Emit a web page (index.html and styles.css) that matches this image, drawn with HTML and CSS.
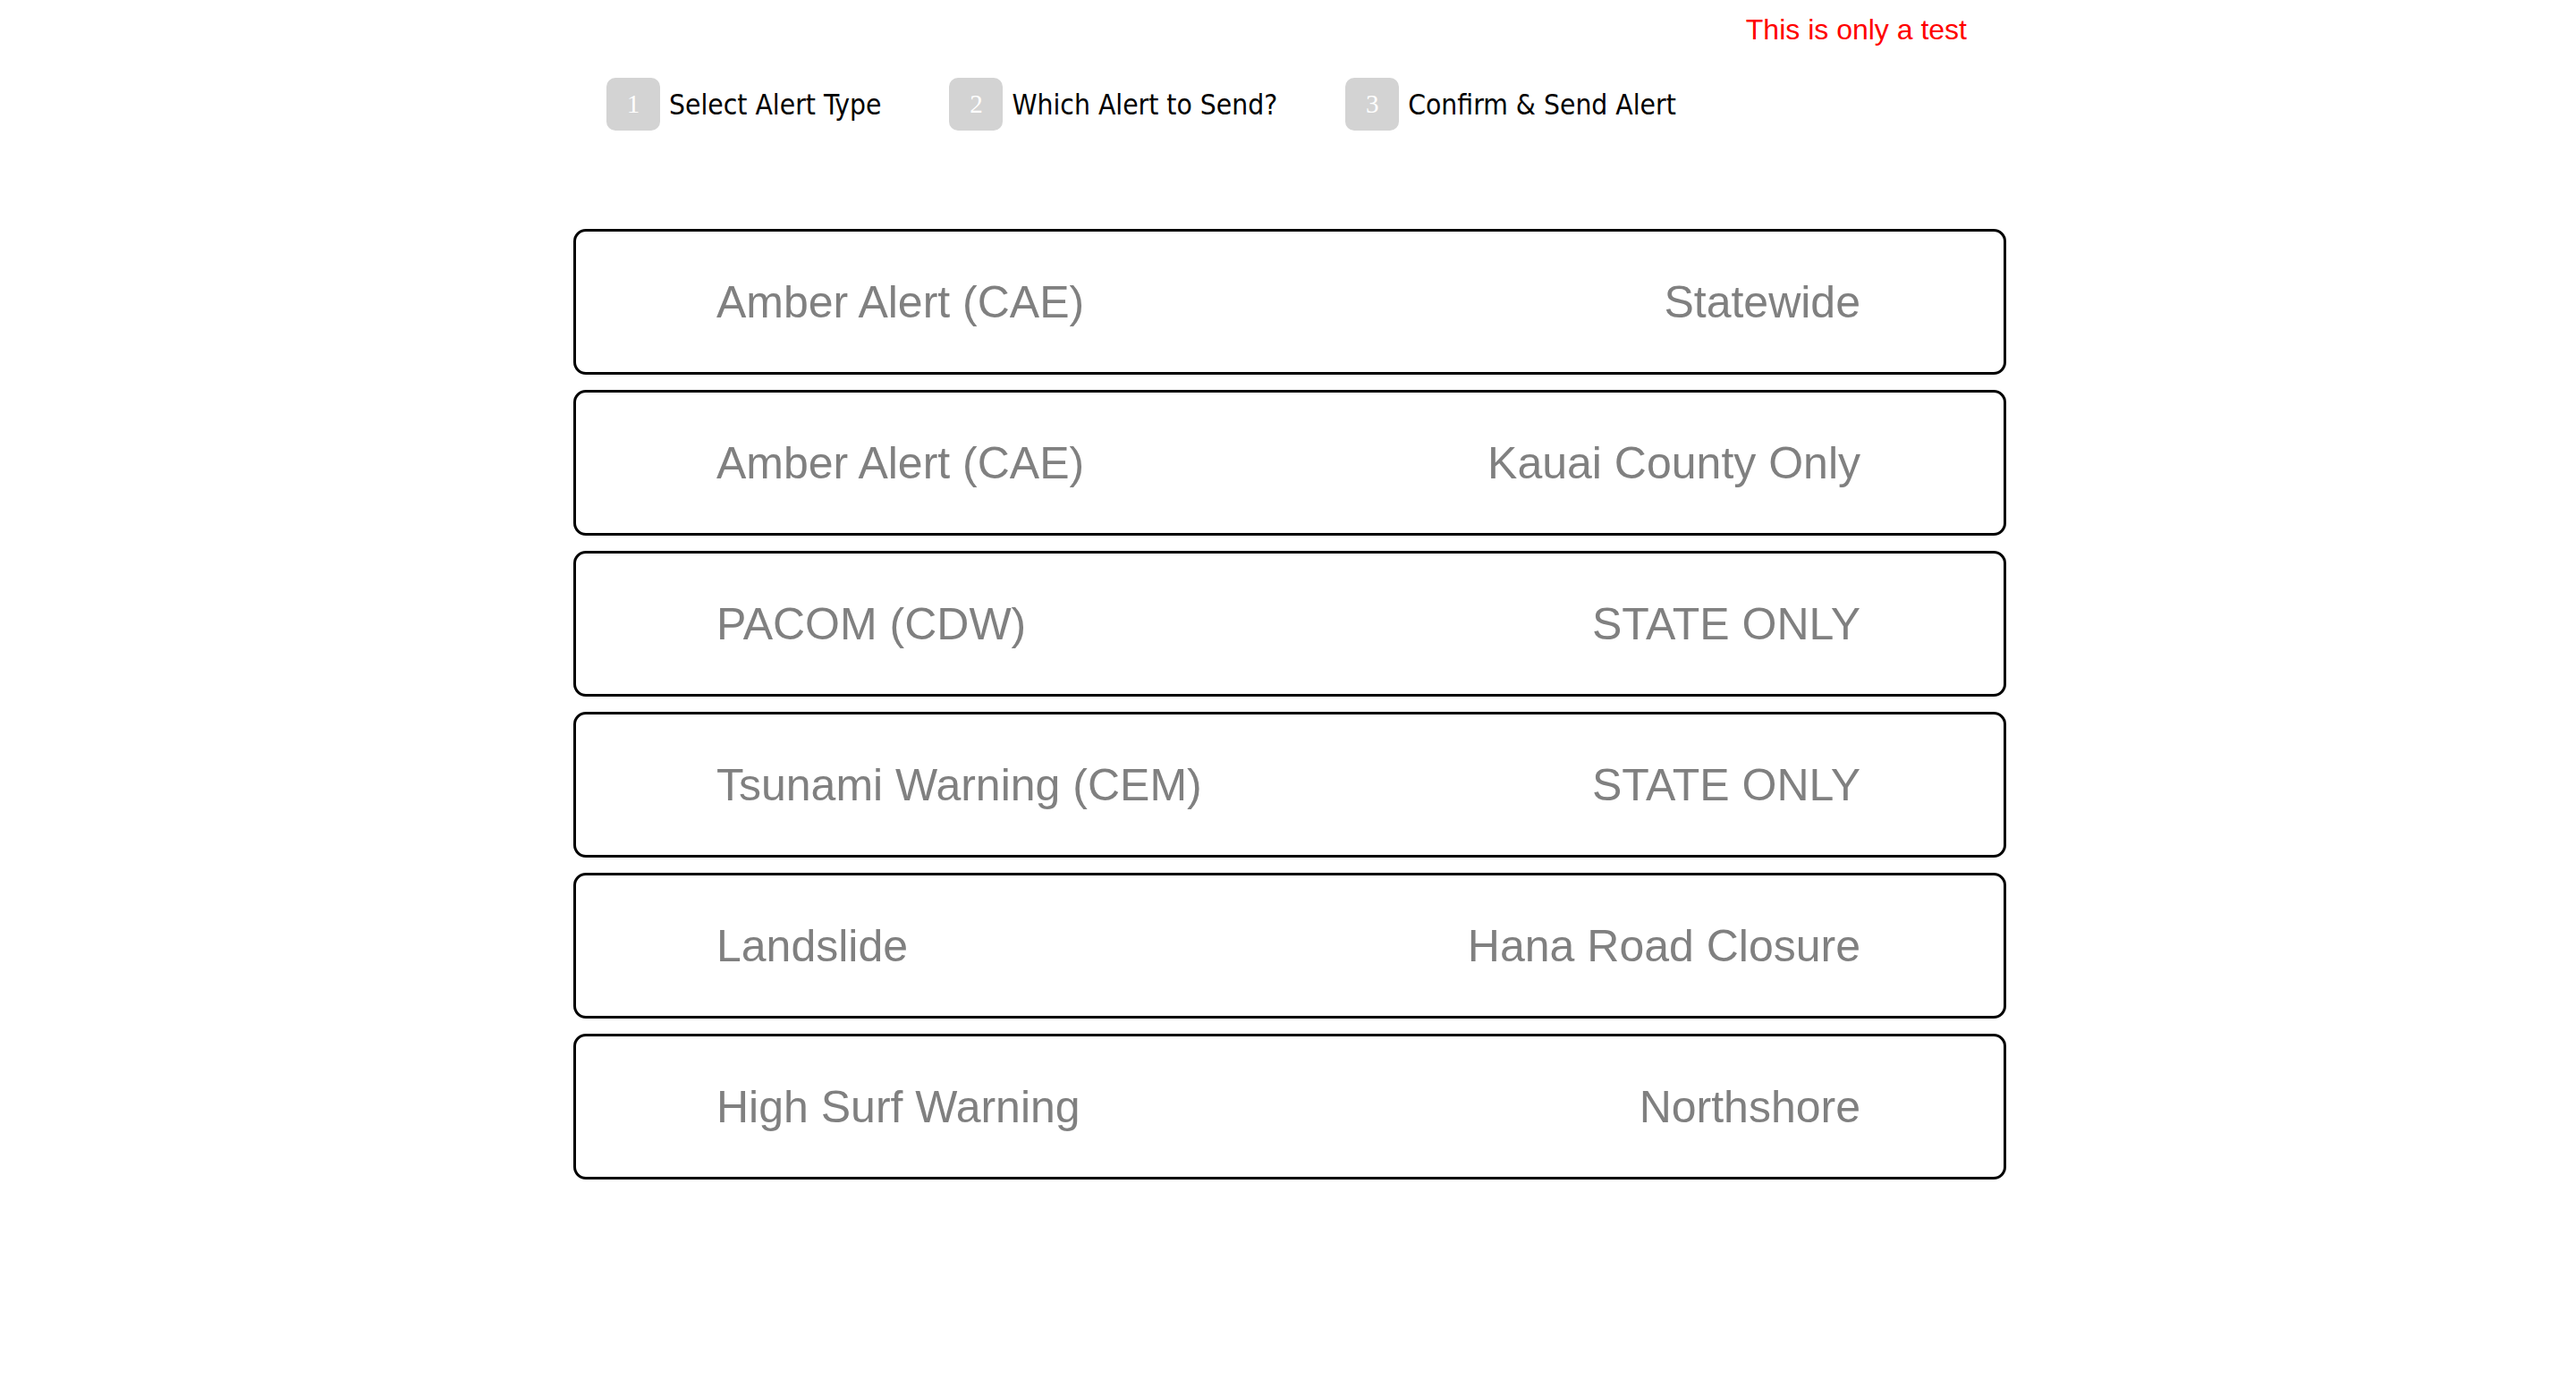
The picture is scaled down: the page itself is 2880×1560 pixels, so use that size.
FILE: index.html
```html
<!DOCTYPE html>
<html lang="en">
<head>
<meta charset="utf-8">
<title>Send Alert</title>
<link rel="stylesheet" href="styles.css">
</head>
<body>
<div class="page">
  <div class="notice">This is only a test</div>
  <div class="steps">
    <div class="step"><span class="badge">1</span><span class="label">Select Alert Type</span></div>
    <div class="step"><span class="badge">2</span><span class="label">Which Alert to Send?</span></div>
    <div class="step"><span class="badge">3</span><span class="label">Confirm &amp; Send Alert</span></div>
  </div>
  <div class="alerts">
    <div class="card"><span class="name">Amber Alert (CAE)</span><span class="area">Statewide</span></div>
    <div class="card"><span class="name">Amber Alert (CAE)</span><span class="area">Kauai County Only</span></div>
    <div class="card"><span class="name">PACOM (CDW)</span><span class="area">STATE ONLY</span></div>
    <div class="card"><span class="name">Tsunami Warning (CEM)</span><span class="area">STATE ONLY</span></div>
    <div class="card"><span class="name">Landslide</span><span class="area">Hana Road Closure</span></div>
    <div class="card"><span class="name">High Surf Warning</span><span class="area">Northshore</span></div>
  </div>
</div>
</body>
</html>
```

FILE: styles.css
```css
html, body {
  margin: 0;
  padding: 0;
  background: #ffffff;
}

body {
  font-family: "Liberation Sans", Arial, sans-serif;
  padding-left: 4px;
}

.page {
  width: 1602px;
  margin: 0 auto;
}

.notice {
  margin-top: 15px;
  padding-right: 44px;
  text-align: right;
  color: #ff0000;
  font-size: 32px;
  line-height: 37px;
}

.steps {
  display: flex;
  align-items: center;
  margin-top: 35px;
  padding-left: 37px;
}

.step {
  display: flex;
  align-items: center;
  gap: 10px;
  margin-right: 76px;
}

.badge {
  display: flex;
  align-items: center;
  justify-content: center;
  width: 60px;
  height: 59px;
  border-radius: 10px;
  background: #d3d3d3;
  color: #ffffff;
  font-family: "Liberation Serif", "Times New Roman", serif;
  font-size: 29px;
}

.label {
  font-family: "DejaVu Sans Condensed", "DejaVu Sans", sans-serif;
  font-stretch: condensed;
  font-size: 31.5px;
  color: #000000;
}

.alerts {
  display: flex;
  flex-direction: column;
  gap: 17px;
  margin-top: 110px;
}

.card {
  box-sizing: border-box;
  display: flex;
  align-items: center;
  justify-content: space-between;
  height: 163px;
  padding: 0 160px 0 157px;
  border: 3px solid #000000;
  border-radius: 14px;
  color: #808080;
  font-size: 50px;
}
```
